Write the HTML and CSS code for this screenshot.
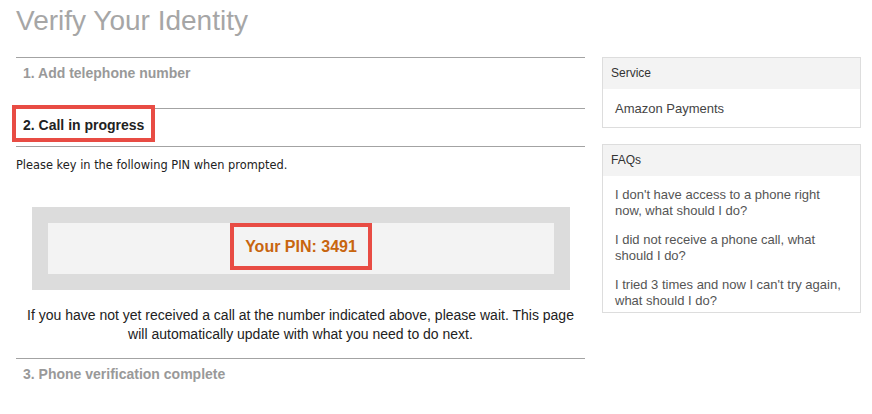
FILE: index.html
```html
<!DOCTYPE html>
<html lang="en">
<head>
  <meta charset="UTF-8" />
  <meta name="viewport" content="width=device-width, initial-scale=1.0"/>
  <title>Verify Your Identity</title>
  <link rel="stylesheet" href="styles.css">
</head>
<body>
  <h1 class="page-title">Verify Your Identity</h1>

  <div class="layout">
    <div class="main">
      <div class="step step-done">
        <h2>1. Add telephone number</h2>
      </div>

      <div class="step-head">
        <h2 class="mark">2. Call in progress</h2>
      </div>
      <div class="step-body">
        <p class="hint">Please key in the following PIN when prompted.</p>

        <div class="pin-box">
          <div class="pin-inner">
            <div class="pin-mark">Your PIN: 3491</div>
          </div>
        </div>

        <p class="wait">If you have not yet received a call at the number indicated above, please wait. This page will automatically update with what you need to do next.</p>
      </div>

      <div class="step step-next">
        <h2>3. Phone verification complete</h2>
      </div>
    </div>

    <div class="side">
      <div class="side-box">
        <div class="side-head">Service</div>
        <div class="side-body">Amazon Payments</div>
      </div>

      <div class="side-box">
        <div class="side-head">FAQs</div>
        <div class="side-body faq">
          <p>I don't have access to a phone right now, what should I do?</p>
          <p>I did not receive a phone call, what should I do?</p>
          <p>I tried 3 times and now I can't try again, what should I do?</p>
        </div>
      </div>
    </div>
  </div>
</body>
</html>
```

FILE: styles.css
```css
body {
  margin: 0;
  padding: 0 11px 0 16px;
  font-family: "Liberation Sans", Arial, sans-serif;
  background: #fff;
  color: #333;
}
.page-title {
  margin: 5px 0 20px 0;
  font-size: 28px;
  line-height: 32px;
  font-weight: normal;
  color: #a6a6a6;
}
.layout {
  display: flex;
  gap: 17px;
  align-items: flex-start;
}
.main {
  flex: 1;
}
.side {
  width: 259px;
}
h2 {
  margin: 0;
  font-size: 14px;
  line-height: 16px;
  font-weight: bold;
}
.step {
  border-top: 1px solid #a3a3a3;
  padding: 7px 7px 27px 7px;
  color: #999;
}
.step-head {
  border-top: 1px solid #a3a3a3;
  border-bottom: 1px solid #a3a3a3;
  padding-bottom: 4px;
}
.mark {
  width: fit-content;
  margin: -4px 0 0 -4px;
  padding: 8px 7px 5px 7px;
  border: 4px solid #e84c44;
  background: #fff;
  color: #222;
}
.step-body {
  padding-bottom: 14px;
}
.hint {
  margin: 11px 0 0 0;
  font-family: "DejaVu Sans", Verdana, sans-serif;
  font-size: 11.4px;
  line-height: 14px;
  color: #222;
}
.pin-box {
  margin: 35px 15px 0 16px;
  padding: 16px;
  background: #dcdcdc;
}
.pin-inner {
  height: 51px;
  background: #f3f3f3;
  display: flex;
  justify-content: center;
  align-items: flex-start;
}
.pin-mark {
  padding: 10px 11px 9px 11px;
  border: 4px solid #e84c44;
  font-size: 16px;
  line-height: 20px;
  font-weight: bold;
  color: #c8650e;
}
.wait {
  margin: 16px 0 0 0;
  padding: 0 8px;
  text-align: center;
  font-size: 14px;
  line-height: 19px;
  color: #222;
}
.side-box {
  border: 1px solid #ddd;
  margin-bottom: 16px;
}
.side-head {
  height: 31px;
  line-height: 31px;
  padding-left: 8px;
  background: #f3f3f3;
  font-size: 12px;
  color: #333;
}
.side-body {
  padding: 12px 12px 10px 12px;
  font-size: 13px;
  line-height: 16px;
  color: #444;
}
.faq {
  padding-top: 11px;
  padding-bottom: 3px;
  color: #555;
}
.faq p {
  margin: 0 0 13px 0;
}
.faq p:last-child {
  margin-bottom: 0;
}
```
